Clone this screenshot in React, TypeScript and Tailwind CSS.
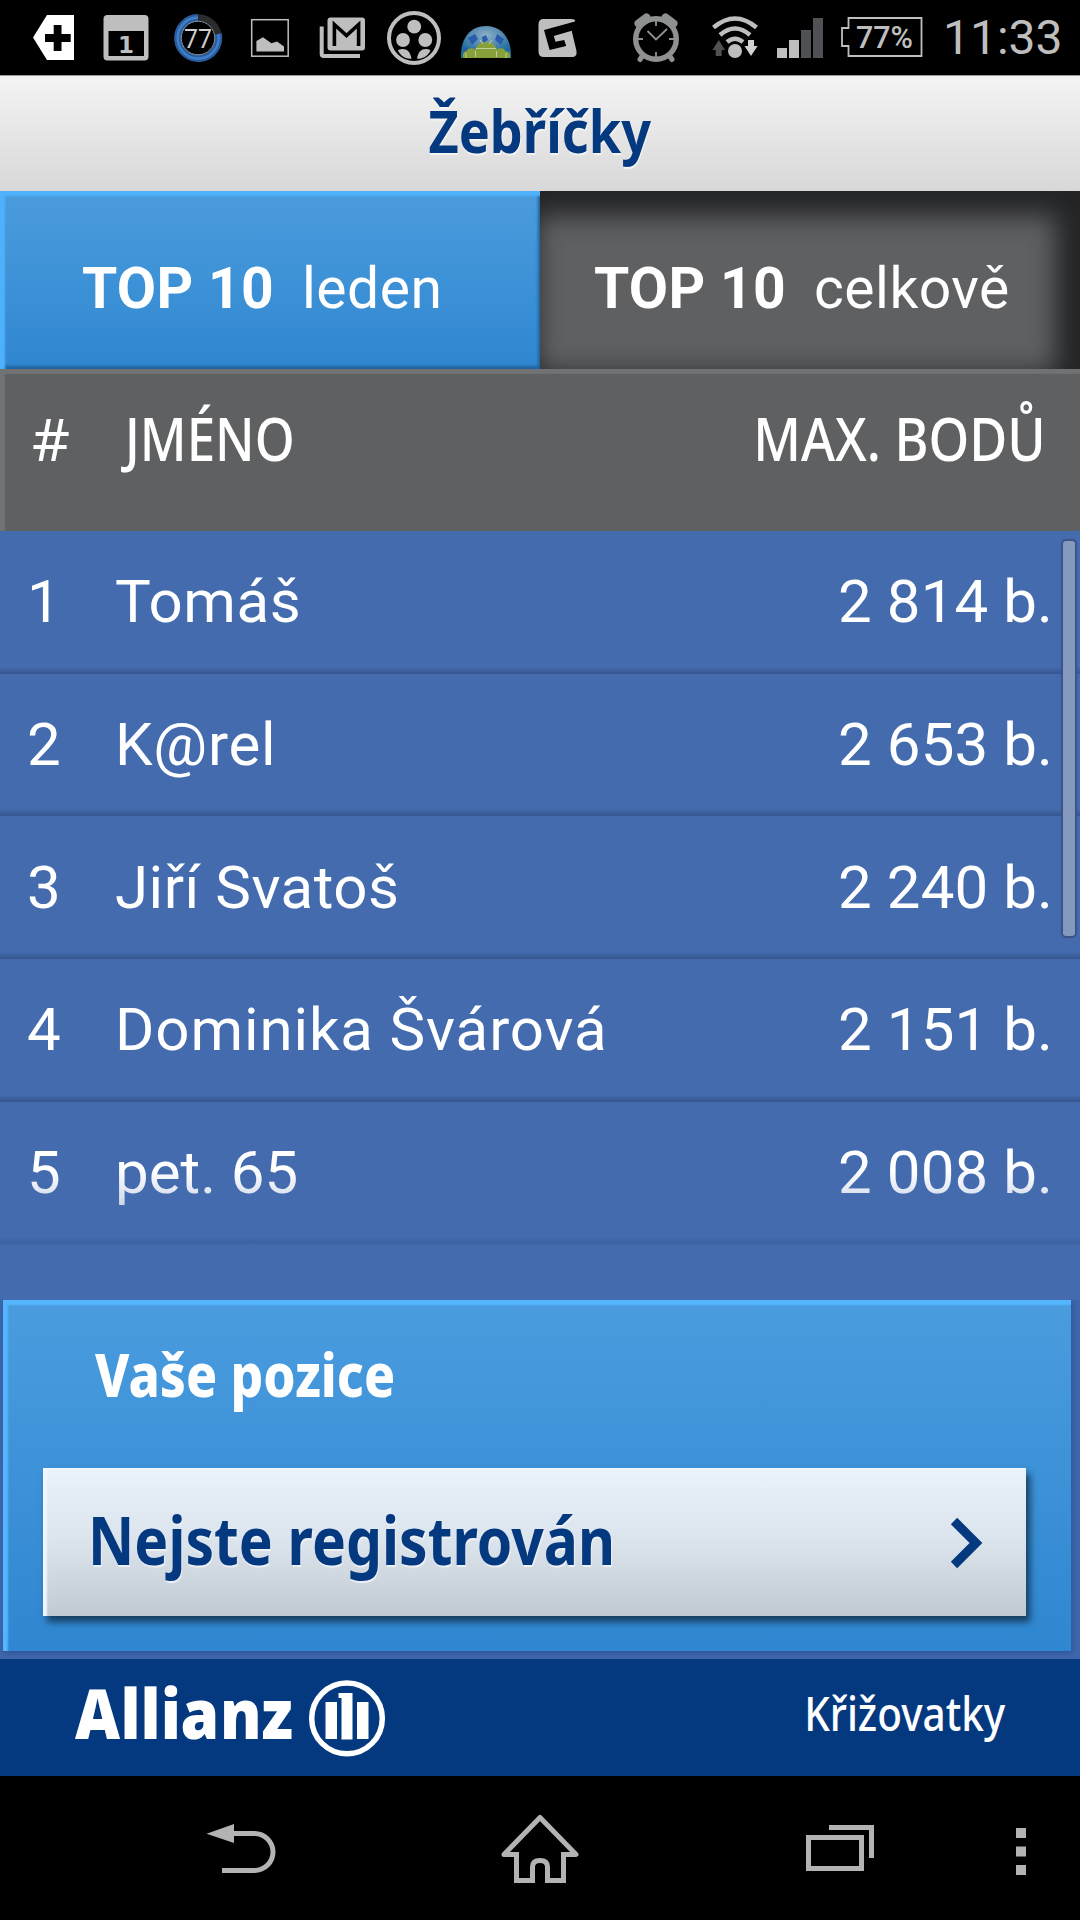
import type { ReactNode } from 'react';

const players = [
  { rank: 1, name: 'Tomáš', points: '2 814 b.', tracking: 'tracking-[0.6px]' },
  { rank: 2, name: 'K@rel', points: '2 653 b.', tracking: 'tracking-[0.7px]' },
  { rank: 3, name: 'Jiří Svatoš', points: '2 240 b.', tracking: 'tracking-[0.5px]' },
  { rank: 4, name: 'Dominika Švárová', points: '2 151 b.', tracking: 'tracking-[0.9px]' },
  { rank: 5, name: 'pet. 65', points: '2 008 b.', tracking: 'tracking-normal' },
];

type GlyphProps = { x: number; w: number; className?: string; children: ReactNode };

// Every status glyph is drawn in the coordinates of the 75px high bar.
const Glyph = ({ x, w, className, children }: GlyphProps) => (
  <svg width={w} height={75} viewBox={`${x} 0 ${w} 75`} className={`shrink-0 ${className ?? ''}`}>
    {children}
  </svg>
);

const StatusBar = () => (
  <div className="flex h-[75px] items-center bg-black pl-8 text-[#bebebe]">
    <Glyph x={32} w={43}>
      <path d="M47 15H74V60H47L33 37.500Z" fill="#fff" />
      <path d="M53.700 25h7.800v9h9.200v8h-9.200v9h-7.800v-9H45v-8h8.700z" fill="#000" />
    </Glyph>
    <Glyph x={103} w={46} className="ml-7">
      <rect x="103.500" y="15" width="45" height="45.500" rx="4" fill="#bebebe" />
      <rect x="108.500" y="31" width="35.500" height="25" fill="#000" />
      <text x="126" y="52.500" textAnchor="middle" fontSize="23" fontWeight="700" fontFamily="DejaVu Sans, sans-serif" fill="#bebebe">1</text>
    </Glyph>
    <Glyph x={173} w={50} className="ml-6">
      <circle cx="198" cy="38" r="20.500" fill="none" stroke="#2a2c2e" strokeWidth="6.500" />
      <path d="M198 17.500A20.500 20.500 0 1 0 218.300 34" fill="none" stroke="#285c9f" strokeWidth="7" />
      <path d="M198 17.500A20.500 20.500 0 1 0 218.300 34" fill="none" stroke="#3f7fca" strokeWidth="2.500" />
      <circle cx="198" cy="38" r="16.800" fill="none" stroke="#8c98a5" strokeWidth="1" />
      <text x="198" y="48" textAnchor="middle" fontSize="26" textLength="28" lengthAdjust="spacingAndGlyphs" fontFamily="Roboto, sans-serif" fill="#cfcfcf">77</text>
    </Glyph>
    <Glyph x={250} w={40} className="ml-[27px]">
      <rect x="251.700" y="19.700" width="36.500" height="36.500" fill="none" stroke="#bebebe" strokeWidth="1.500" />
      <path d="M256.400 51.500V41L263 37.300l8.400 6 5.600-1.800 7 5v5z" fill="#bebebe" />
    </Glyph>
    <Glyph x={318} w={48} className="ml-7">
      <path d="M321.700 26.500V54a2 2 0 0 0 2 2H360" fill="none" stroke="#bebebe" strokeWidth="4" />
      <rect x="327.500" y="17.500" width="37.500" height="33" rx="3" fill="#bebebe" />
      <path d="M334.400 46V24.500L346.500 35.500 358.600 24.500V46" fill="none" stroke="#000" strokeWidth="3.600" />
    </Glyph>
    <Glyph x={386} w={56} className="ml-5">
      <circle cx="414" cy="38" r="25" fill="none" stroke="#bebebe" strokeWidth="4" />
      <circle cx="414.200" cy="26.700" r="6.900" fill="#bebebe" />
      <circle cx="403" cy="40" r="6.900" fill="#bebebe" />
      <circle cx="425.300" cy="40" r="6.900" fill="#bebebe" />
      <path d="M398 50c6-2.500 12-1 13.500 8.500C406 59.500 400 56 398 50zM430.500 50c-6-2.500-12-1-13.500 8.500 5.500 1 11.500-2.500 13.500-8.500z" fill="#bebebe" />
    </Glyph>
    <Glyph x={460} w={53} className="ml-[18px]">
      <defs>
        <radialGradient id="sky" cx=".5" cy=".3" r=".6">
          <stop offset="0" stopColor="#8fb0c8" />
          <stop offset=".55" stopColor="#5289b0" />
          <stop offset="1" stopColor="#1b6b9c" />
        </radialGradient>
      </defs>
      <path d="M461 58C460 39 470 26 486 26S512 39 511 58Z" fill="url(#sky)" />
      <path d="M468 38l7-4 3 5-6 6zM482 37l4-2 2 5-5 3zM497 34l7 5-3 6-6-5zM464 46l5 3-4 4z" fill="#2a5cab" />
      <path d="M463 58v-4q1-3 4-3v-1q2-3 8-1l1-1q2-6 10-6t10 6l1 1q6-2 8 1v1q4 0 5 3v4z" fill="#86a13a" />
      <path d="M476 48.500h20M475.500 51v6M496.500 51v6M480 40l3 4M492 40l-3 4M466 53v5M506 53v5" stroke="#c3d09a" strokeWidth="1" />
    </Glyph>
    <Glyph x={537} w={42} className="ml-6">
      <path d="M543.500 19H571q5 0 4 2.500L544 30l5.600 20 16.600-4-2-6-8.700 1.700-1.700-5.700L571.700 30.700 576.500 51q.8 6-4.500 6H544q-5.500 0-5.500-5.500V24.500q0-5.500 5-5.500z" fill="#bebebe" />
    </Glyph>
    <Glyph x={632} w={48} className="ml-[53px]">
      <g fill="none" stroke="#8f9190">
        <circle cx="656" cy="39" r="20.300" strokeWidth="5.400" />
        <path d="M638.500 23.500l8-6M673.500 23.500l-8-6" strokeWidth="8" strokeLinecap="round" />
        <path d="M643 55l-3 4.500M669 55l3 4.500" strokeWidth="5" strokeLinecap="round" />
        <path d="M656 21v5M656 52v5M638 39h5M669 39h5M647.500 31l8.500 8.500L667 29" strokeWidth="1.800" />
      </g>
    </Glyph>
    <Glyph x={711} w={48} className="ml-[31px]">
      <circle cx="735" cy="51" r="7" fill="#bebebe" />
      <path d="M713.500 27.500Q735 9.500 756.500 27.500M720 35Q735 22 750 35M727 42Q735 35.500 743 42" fill="none" stroke="#bebebe" strokeWidth="4.500" />
      <path d="M718.800 40l6.200 10h-3.300v6h-6v-6h-3.300z" fill="#505154" />
      <path d="M748 40h6v6h3.600L751 56l-6.500-10h3.500z" fill="#d2d2d2" />
    </Glyph>
    <Glyph x={776} w={48} className="ml-[17px]">
      <path d="M777 48h10v10h-10zM789 40h10v18h-10z" fill="#bebebe" />
      <path d="M801 30h10v28h-10zM813 18h10v40h-10z" fill="#505154" />
    </Glyph>
    <Glyph x={840} w={83} className="ml-4">
      <path d="M848.500 18H921.500V56H848.500V46H842V28H848.500Z" fill="none" stroke="#bebebe" strokeWidth="1.800" />
      <text x="856" y="48" fontSize="31" fontWeight="500" textLength="57" lengthAdjust="spacingAndGlyphs" fontFamily="Roboto, sans-serif" fill="#bebebe">77%</text>
    </Glyph>
    <span className="ml-[20px] font-[Roboto,sans-serif] text-[48px] leading-[79px] font-normal">11:33</span>
  </div>
);

const Tabs = () => (
  <div className="flex h-[178px] font-[Roboto,sans-serif] text-[57px] leading-none text-white">
    <button className="flex w-[540px] items-center bg-linear-to-b from-[#4b9cdd] to-[#2f87d0] pt-[17px] pl-[82px] shadow-[inset_5px_5px_2px_#4fb1fb,inset_-2px_-3px_3px_#20639f]">
      <b className="font-bold tracking-[0.3px]">TOP 10</b>
      <span className="ml-[28px] font-normal tracking-[0.5px]">leden</span>
    </button>
    <button className="flex w-[540px] items-center bg-[#5f6062] pt-[17px] pl-[54px] shadow-[inset_-14px_14px_26px_10px_#232426,inset_4px_0_3px_#5f6062]">
      <b className="font-bold tracking-[0.3px]">TOP 10</b>
      <span className="ml-[28px] font-normal tracking-[0.5px]">celkově</span>
    </button>
  </div>
);

const Ranking = () => (
  <div className="relative h-[769px] overflow-hidden bg-[#436bae] font-[Roboto,sans-serif] text-[60px] text-white">
    {players.map((player) => (
      <div
        key={player.rank}
        className="flex h-[142.700px] items-center bg-[linear-gradient(to_top,#375590,#436bae_7px)] pr-[27px] pl-[27px]"
      >
        <span className="w-[88px]">{player.rank}</span>
        <span className={`grow ${player.tracking}`}>{player.name}</span>
        <span className="tracking-[0.1px]">{player.points}</span>
      </div>
    ))}
    <div className="absolute inset-x-0 bottom-0 h-[130px] bg-linear-to-b from-[#436bae]/0 to-[#436bae]" />
    <div className="absolute top-[10px] right-[5px] h-[395px] w-[12px] rounded-[3px] bg-[#8499bd] shadow-[0_0_1px_2px_#3a5488]" />
  </div>
);

const Position = () => (
  <section className="h-[359px] bg-[#3f66aa] pr-[9px] pl-[3px]">
    <div className="flex h-[351px] flex-col items-start bg-linear-to-b from-[#4a9cde] to-[#2f87d1] px-10 pt-[32px] shadow-[inset_5px_5px_2px_#53b6ff,1px_2px_5px_#2d559b]">
      <h2 className="ml-[52px] origin-left scale-x-[0.843] text-[61px] leading-[83px] font-extrabold text-white">Vaše pozice</h2>
      <button className="mt-[53px] flex h-[148px] w-[983px] items-center justify-between bg-linear-to-b from-[#e9f3fa] via-[#dbe3ec] to-[#c1c9d1] pr-[42px] pl-[45px] text-[#05397f] shadow-[inset_4px_2px_2px_#f1f6ff,4px_6px_7px_#163f61]">
        <span className="origin-left scale-x-[0.851] pb-[6px] text-[67px] leading-none font-bold whitespace-nowrap [text-shadow:1px_2px_1px_#eef2f6]">Nejste registrován</span>
        <svg width="34" height="54" viewBox="0 0 34 54" fill="none" stroke="#05397f" strokeWidth="9">
          <path d="M4 6L26 28 4 50" />
        </svg>
      </button>
    </div>
  </section>
);

const Footer = () => (
  <footer className="flex h-[117px] items-center justify-between bg-[#05397f] pr-[75px] pl-[74px] text-white">
    <svg width="314" height="80" viewBox="74 1677 314 80" fill="#fff">
      <text
        transform="scale(0.9 1)"
        x="83.3 134 156.2 178.6 200.5 244.5 290.5"
        y="1738.500"
        fontSize="69"
        fontWeight="800"
        fontFamily="Open Sans, Noto Sans, sans-serif"
      >
        Allianz
      </text>
      <circle cx="347" cy="1717.400" r="35.300" fill="none" stroke="#fff" strokeWidth="5.500" />
      <path d="M325.500 1701h11.500v37h-11.500zM340.500 1692h12v46.500h-11V1697h-3V1692zM357 1701h11.500v37h-11.500z" />
    </svg>
    <span className="origin-right scale-x-[0.862] pb-[8px] text-[47px] leading-none font-medium">Křižovatky</span>
  </footer>
);

const NavBar = () => (
  <nav className="flex h-[144px] items-center bg-black pl-[206px]">
    <svg width="70" height="72" viewBox="206 1812 70 72" fill="none" stroke="#b3b3b3" strokeWidth="5">
      <path d="M206.500 1833.800L234 1824v19z" fill="#b3b3b3" stroke="none" />
      <path d="M232 1833.500H254.500a18.400 18.400 0 0 1 0 37H222" />
    </svg>
    <svg width="80" height="72" viewBox="500 1812 80 72" fill="none" stroke="#b3b3b3" strokeWidth="5" className="ml-[224px]">
      <path d="M516.500 1854.500V1880.500H532.500V1867Q532.500 1860.500 540 1860.500T547.500 1867V1880.500H563.500V1854.500" />
      <path d="M519 1854.500H504L540 1817.500 576 1854.500H561" strokeLinejoin="round" />
    </svg>
    <svg width="70" height="72" viewBox="805 1812 70 72" fill="none" stroke="#b3b3b3" strokeWidth="5" className="ml-[225px]">
      <rect x="808.500" y="1837.500" width="53" height="31" />
      <path d="M829 1827.500H871.500V1858" />
    </svg>
    <svg width="12" height="72" viewBox="1015 1812 12 72" fill="#b3b3b3" className="ml-[140px]">
      <path d="M1016 1828h10v10h-10zM1016 1846.500h10v10h-10zM1016 1865h10v10h-10z" />
    </svg>
  </nav>
);

export default function App() {
  return (
    <main className="h-[1920px] w-[1080px] overflow-hidden bg-black font-['Noto_Sans',sans-serif]">
      <StatusBar />
      <header className="flex h-[116px] items-center justify-center border-t border-[#9c9699] bg-linear-to-b from-[#f4f4f4] to-[#d8d8d8] pb-[7px]">
        <h1 className="scale-x-[0.885] text-[59px] leading-none font-bold text-[#05397f] [text-shadow:1px_2px_1px_#f4f4f4]">Žebříčky</h1>
      </header>
      <Tabs />
      <div className="flex h-[162px] items-center bg-[#5f6062] pr-[34px] pb-6 pl-8 text-[59px] leading-none text-white shadow-[inset_5px_5px_1px_#717274]">
        <span className="w-[93px]">#</span>
        <span className="origin-left scale-x-[0.865] font-medium">JMÉNO</span>
        <span className="ml-auto origin-right scale-x-[0.882] font-medium">MAX. BODŮ</span>
      </div>
      <Ranking />
      <Position />
      <Footer />
      <NavBar />
    </main>
  );
}
